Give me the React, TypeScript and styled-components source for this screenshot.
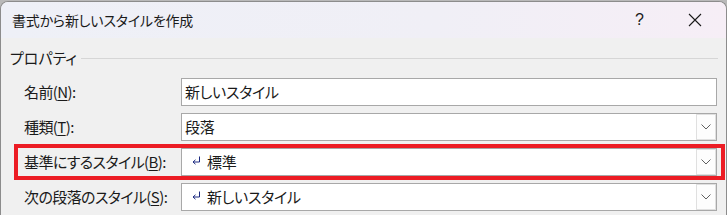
import React from 'react';
import styled, { createGlobalStyle } from 'styled-components';

const FONT = `"Noto Sans CJK JP", "Noto Sans", "Liberation Sans", sans-serif`;

const GlobalStyle = createGlobalStyle`
  html, body {
    margin: 0;
    padding: 0;
    background: #b9b9b9;
  }
  body {
    font-family: ${FONT};
    font-feature-settings: "palt";
    overflow: hidden;
  }
`;

interface FieldRow {
  label: string;
  key: string;
  after: string;
  value: string;
  dropdown?: boolean;
  mark?: boolean;
  highlight?: boolean;
}

const rows: FieldRow[] = [
  { label: '名前(', key: 'N', after: '):', value: '新しいスタイル' },
  { label: '種類(', key: 'T', after: '):', value: '段落', dropdown: true },
  { label: '基準にするスタイル(', key: 'B', after: '):', value: '標準', dropdown: true, mark: true, highlight: true },
  { label: '次の段落のスタイル(', key: 'S', after: '):', value: '新しいスタイル', dropdown: true, mark: true },
];

const ReturnMark: React.FC = () => (
  <svg width="9" height="9" viewBox="0 0 9 9">
    <path d="M7.5 0.5 V6 H1.5" fill="none" stroke="#1c2a80" strokeWidth="1" />
    <path d="M1 6 L3.5 3.8 M1 6 L3.5 8.2" fill="none" stroke="#1c2a80" strokeWidth="1" />
  </svg>
);

const Chevron: React.FC = () => (
  <svg width="10" height="6" viewBox="0 0 10 6">
    <path d="M0.5 0.5 L5 5 L9.5 0.5" fill="none" stroke="#606060" strokeWidth="1" />
  </svg>
);

const App: React.FC = () => {
  return (
    <>
      <GlobalStyle />
      <Window>
        <TitleBar>
          <Title>書式から新しいスタイルを作成</Title>
          <Controls>
            <ControlButton>?</ControlButton>
            <ControlButton>
              <svg width="14" height="14" viewBox="0 0 14 14">
                <path d="M1 1 L13 13 M13 1 L1 13" stroke="#1a1a1a" strokeWidth="1.1" />
              </svg>
            </ControlButton>
          </Controls>
        </TitleBar>

        <Body>
          <GroupHeader>
            <span>プロパティ</span>
            <GroupLine />
          </GroupHeader>

          <Rows>
            {rows.map((r) => (
              <Row key={r.key} $highlight={r.highlight}>
                <Label>
                  {r.label}
                  <u>{r.key}</u>
                  {r.after}
                </Label>
                <Field>
                  <FieldText $mark={r.mark}>
                    {r.mark && <ReturnMark />}
                    <span>{r.value}</span>
                  </FieldText>
                  {r.dropdown && (
                    <DropButton>
                      <Chevron />
                    </DropButton>
                  )}
                </Field>
              </Row>
            ))}
          </Rows>
        </Body>
      </Window>
    </>
  );
};

export default App;

// Styles
const Window = styled.div`
  width: 725px;
  height: 214px;
  margin-top: 1px;
  border: 1px solid #8c8c8c;
  border-bottom: none;
  border-radius: 8px 8px 0 0;
  overflow: hidden;
  background: #f0f0f0;
`;

const TitleBar = styled.div`
  height: 36px;
  display: flex;
  align-items: center;
  justify-content: space-between;
  padding-left: 11px;
  background: linear-gradient(to right, #eef0f7, #f0eff6 60%, #f6eef6);
`;

const Title = styled.div`
  font-size: 14px;
  line-height: 20px;
  color: #1a1a1a;
  letter-spacing: -0.2px;
`;

const Controls = styled.div`
  display: flex;
  align-items: center;
  height: 100%;
  margin-right: 4px;
`;

const ControlButton = styled.div`
  width: 55px;
  height: 100%;
  display: flex;
  align-items: center;
  justify-content: center;
  font-family: "Liberation Sans", sans-serif;
  font-size: 16px;
  color: #1a1a1a;
`;

const Body = styled.div`
  padding-top: 10px;
`;

const GroupHeader = styled.div`
  display: flex;
  align-items: center;
  gap: 4px;
  padding-left: 9px;
  padding-right: 8px;
  height: 20px;
  font-size: 15px;
  line-height: 20px;
  color: #1a1a1a;
`;

const GroupLine = styled.div`
  flex: 1;
  height: 1px;
  margin-top: 1px;
  background: #d6d6d6;
`;

const Rows = styled.div`
  display: flex;
  flex-direction: column;
  gap: 7px;
  padding-top: 10px;
`;

const Row = styled.div<{ $highlight?: boolean }>`
  display: grid;
  grid-template-columns: 157px 536px;
  align-items: center;
  margin-left: ${(p) => (p.$highlight ? '13px' : '23px')};
  ${(p) =>
    p.$highlight &&
    `
    border: 4px solid #ec1c24;
    margin-top: -4px;
    margin-bottom: -4px;
    padding-left: 6px;
    padding-right: 4px;
    width: fit-content;
  `}
`;

const Label = styled.div`
  font-size: 15px;
  line-height: 20px;
  color: #1a1a1a;
  white-space: nowrap;
  letter-spacing: -0.6px;

  u {
    text-underline-offset: 2px;
  }
`;

const Field = styled.div`
  height: 28px;
  box-sizing: border-box;
  border: 1px solid #a8a8a8;
  background: #fff;
  display: flex;
  align-items: center;
  justify-content: space-between;
  padding: 0 0 0 3px;
`;

const FieldText = styled.div<{ $mark?: boolean }>`
  display: flex;
  align-items: center;
  gap: 6px;
  padding-left: ${(p) => (p.$mark ? '7px' : '0')};
  font-size: 15px;
  line-height: 20px;
  color: #1a1a1a;
  letter-spacing: -0.3px;

  svg {
    margin-top: -4px;
  }
`;

const DropButton = styled.div`
  width: 20px;
  height: 26px;
  box-sizing: border-box;
  border: 1px solid #e0e0e0;
  background: #fdfdfd;
  display: flex;
  align-items: center;
  justify-content: center;
`;
